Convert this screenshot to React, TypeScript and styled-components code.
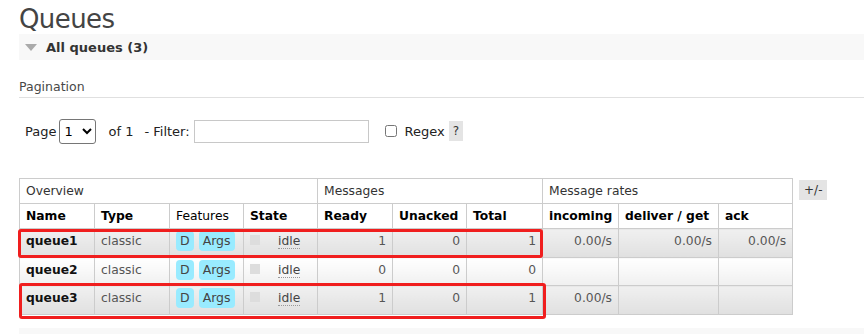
import styled, { createGlobalStyle } from "styled-components";

const GlobalStyle = createGlobalStyle`
	html, body {
		margin: 0;
		padding: 0;
		background: #fff;
	}
	body {
		font-family: "DejaVu Sans", Verdana, sans-serif;
		font-size: 12px;
		color: #484848;
	}
`;

type Queue = {
	name: string;
	ready: number;
	unacked: number;
	total: number;
	incoming: string;
	deliver: string;
	ack: string;
};

const queues: Queue[] = [
	{ name: "queue1", ready: 1, unacked: 0, total: 1, incoming: "0.00/s", deliver: "0.00/s", ack: "0.00/s" },
	{ name: "queue2", ready: 0, unacked: 0, total: 0, incoming: "", deliver: "", ack: "" },
	{ name: "queue3", ready: 1, unacked: 0, total: 1, incoming: "0.00/s", deliver: "", ack: "" },
];

const colWidths = [75, 75, 74, 74, 75, 74, 76, 76, 100, 74];
const rowHeights = [29, 28, 29];

const App = () => {
	return (
		<Page>
			<GlobalStyle />
			<Title>Queues</Title>
			<SectionBar>
				<Triangle />
				<SectionTitle>All queues (3)</SectionTitle>
			</SectionBar>
			<Pagination>Pagination</Pagination>
			<Controls>
				<Label $after={3}>Page</Label>
				<Select defaultValue="1">
					<option value="1">1</option>
				</Select>
				<Label $after={11}>of 1</Label>
				<Label $after={4}>- Filter:</Label>
				<FilterInput type="text" />
				<Checkbox type="checkbox" />
				<Label $after={4}>Regex</Label>
				<Help>?</Help>
			</Controls>
			<TableRow>
				<TableWrap>
					<Table>
						<colgroup>
							{colWidths.map((w, i) => (
								<col key={i} style={{ width: w }} />
							))}
						</colgroup>
						<thead>
							<tr>
								<GroupTh colSpan={4}>Overview</GroupTh>
								<GroupTh colSpan={3}>Messages</GroupTh>
								<GroupTh colSpan={3}>Message rates</GroupTh>
							</tr>
							<tr>
								<Th>Name</Th>
								<Th>Type</Th>
								<Th $normal>Features</Th>
								<Th>State</Th>
								<Th>Ready</Th>
								<Th>Unacked</Th>
								<Th>Total</Th>
								<Th>incoming</Th>
								<Th>deliver / get</Th>
								<Th>ack</Th>
							</tr>
						</thead>
						<tbody>
							{queues.map((q, i) => (
								<Tr key={q.name} $alt={i % 2 === 0} $h={rowHeights[i]}>
									<NameCell>{q.name}</NameCell>
									<Td>classic</Td>
									<Td>
										<Tag>D</Tag>
										<Tag>Args</Tag>
									</Td>
									<Td>
										<StateBox />
										<Idle>idle</Idle>
									</Td>
									<NumCell>{q.ready}</NumCell>
									<NumCell>{q.unacked}</NumCell>
									<NumCell>{q.total}</NumCell>
									<NumCell>{q.incoming}</NumCell>
									<NumCell>{q.deliver}</NumCell>
									<NumCell>{q.ack}</NumCell>
								</Tr>
							))}
						</tbody>
					</Table>
					<Highlight $top={51} $left={-1} $width={525} $height={29} />
					<Highlight $top={105} $left={0} $width={527} $height={36} />
				</TableWrap>
				<Toggle>+/-</Toggle>
			</TableRow>
			<FooterBar />
		</Page>
	);
};

const Page = styled.div`
	padding-left: 19px;
	overflow: hidden;
	height: 334px;
`;

const Title = styled.h1`
	margin: 0;
	padding-top: 4px;
	height: 30px;
	font-size: 26px;
	letter-spacing: -0.6px;
	font-weight: normal;
	line-height: 30px;
	color: #444;
`;

const SectionBar = styled.div`
	display: flex;
	align-items: center;
	height: 26px;
	background: #f8f8f8;
	padding-left: 6px;
`;

const Triangle = styled.span`
	width: 0;
	height: 0;
	border-left: 6px solid transparent;
	border-right: 6px solid transparent;
	border-top: 7px solid #aaa;
	margin-right: 9px;
`;

const SectionTitle = styled.span`
	font-weight: bold;
	font-size: 13px;
	color: #333;
`;

const Pagination = styled.div`
	margin-top: 20px;
	padding-bottom: 3px;
	border-bottom: 1px solid #e0e0e0;
	font-size: 12.5px;
	line-height: 14px;
	color: #484848;
`;

const Controls = styled.div`
	display: flex;
	align-items: center;
	height: 26px;
	margin-top: 20px;
	padding-left: 6px;
	font-size: 13px;
	color: #222;
`;

const Label = styled.span<{ $after: number }>`
	margin-right: ${(p) => p.$after}px;
`;

const Select = styled.select`
	width: 37px;
	height: 25px;
	font-family: "DejaVu Sans", sans-serif;
	font-size: 13px;
	border: 1px solid #767676;
	border-radius: 3px;
	background: #fff;
	color: #000;
	margin-right: 12px;
`;

const FilterInput = styled.input`
	box-sizing: border-box;
	width: 175px;
	height: 23px;
	border: 1px solid #c8c8c8;
	padding: 1px 2px;
	margin: 0 16px 0 0;
`;

const Checkbox = styled.input`
	width: 12px;
	height: 12px;
	margin: 0 8px 0 0;
`;

const Help = styled.span`
	display: inline-block;
	padding: 2px 4px;
	background: #e4e4e4;
	color: #333;
	font-size: 12px;
	line-height: 16px;
`;

const TableRow = styled.div`
	display: flex;
	align-items: flex-start;
	gap: 6px;
	margin-top: 34px;
`;

const TableWrap = styled.div`
	position: relative;
`;

const Table = styled.table`
	table-layout: fixed;
	width: 773px;
	border-collapse: collapse;
	font-size: 12.3px;
`;

const GroupTh = styled.th`
	border: 1px solid #ccc;
	height: 24px;
	padding: 0 6px;
	text-align: left;
	font-weight: normal;
	color: #333;
	background: #fff;
`;

const Th = styled.th<{ $normal?: boolean }>`
	border: 1px solid #ccc;
	height: 24px;
	padding: 0 6px;
	text-align: left;
	font-weight: ${(p) => (p.$normal ? "normal" : "bold")};
	color: #000;
	background: #fff;
	white-space: nowrap;
	overflow: hidden;
`;

const Tr = styled.tr<{ $alt: boolean; $h: number }>`
	height: ${(p) => p.$h}px;
	td {
		background: ${(p) =>
			p.$alt ? "linear-gradient(#f0f0f0, #e0e0e0)" : "linear-gradient(#fff, #f0f0f0)"};
	}
`;

const Td = styled.td`
	border: 1px solid #ccc;
	padding: 5px 6px 0;
	vertical-align: top;
	color: #555;
	white-space: nowrap;
	overflow: hidden;
`;

const NameCell = styled(Td)`
	font-weight: bold;
	color: #111;
`;

const NumCell = styled(Td)`
	text-align: right;
`;

const Tag = styled.span`
	display: inline-block;
	background: #99ebff;
	color: #444;
	border-radius: 4px;
	padding: 2px 4px;
	margin: -3px 5px 0 0;
	font-size: 12.5px;
	line-height: 16px;
	vertical-align: top;
`;

const StateBox = styled.span`
	display: inline-block;
	width: 10px;
	height: 10px;
	background: #ddd;
	margin-right: 18px;
	vertical-align: top;
	margin-top: 1px;
`;

const Idle = styled.span`
	border-bottom: 1px dotted #999;
	color: #444;
`;

const Highlight = styled.div<{ $top: number; $left: number; $width: number; $height: number }>`
	position: absolute;
	top: ${(p) => p.$top}px;
	left: ${(p) => p.$left}px;
	width: ${(p) => p.$width}px;
	height: ${(p) => p.$height}px;
	box-sizing: border-box;
	border: 3px solid #f01e1e;
	border-radius: 3px;
	pointer-events: none;
`;

const Toggle = styled.span`
	display: inline-block;
	margin-top: 2px;
	padding: 2px 5px;
	background: #e4e4e4;
	color: #333;
	font-size: 12px;
	line-height: 16px;
`;

const FooterBar = styled.div`
	margin-top: 13px;
	height: 20px;
	background: #f8f8f8;
`;

export default App;
